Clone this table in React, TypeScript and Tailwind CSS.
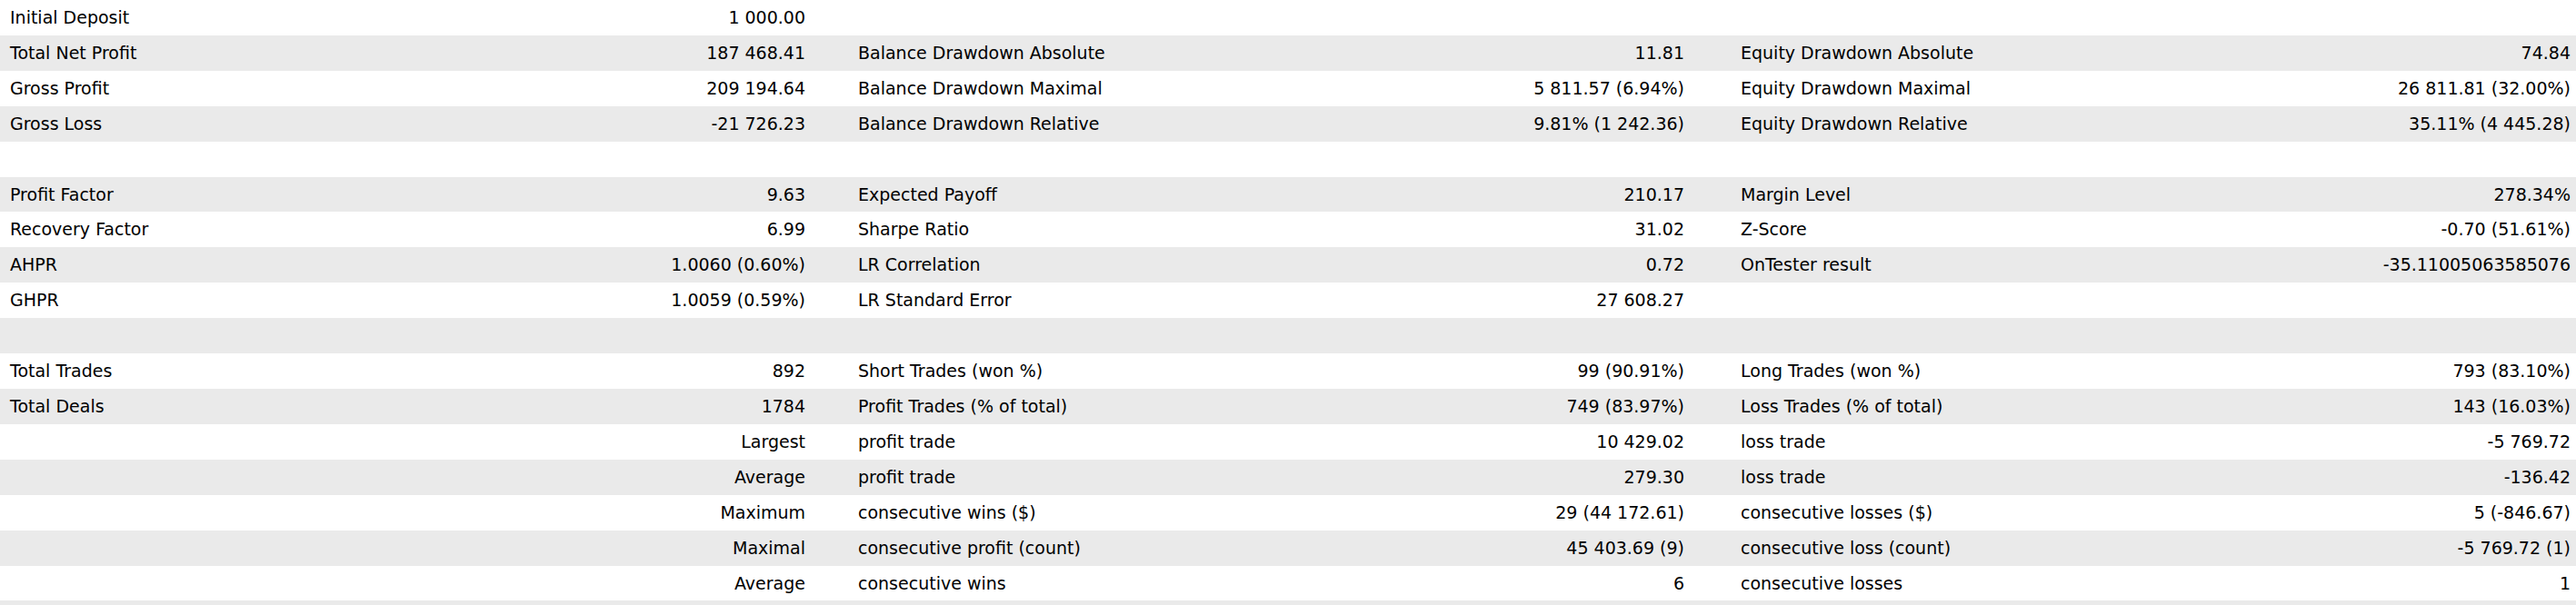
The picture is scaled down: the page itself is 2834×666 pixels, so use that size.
import React from "react";

type Row = [string, string, string, string, string, string];

const rows: Row[] = [
  ["Initial Deposit", "1 000.00", "", "", "", ""],
  ["Total Net Profit", "187 468.41", "Balance Drawdown Absolute", "11.81", "Equity Drawdown Absolute", "74.84"],
  ["Gross Profit", "209 194.64", "Balance Drawdown Maximal", "5 811.57 (6.94%)", "Equity Drawdown Maximal", "26 811.81 (32.00%)"],
  ["Gross Loss", "-21 726.23", "Balance Drawdown Relative", "9.81% (1 242.36)", "Equity Drawdown Relative", "35.11% (4 445.28)"],
  ["", "", "", "", "", ""],
  ["Profit Factor", "9.63", "Expected Payoff", "210.17", "Margin Level", "278.34%"],
  ["Recovery Factor", "6.99", "Sharpe Ratio", "31.02", "Z-Score", "-0.70 (51.61%)"],
  ["AHPR", "1.0060 (0.60%)", "LR Correlation", "0.72", "OnTester result", "-35.11005063585076"],
  ["GHPR", "1.0059 (0.59%)", "LR Standard Error", "27 608.27", "", ""],
  ["", "", "", "", "", ""],
  ["Total Trades", "892", "Short Trades (won %)", "99 (90.91%)", "Long Trades (won %)", "793 (83.10%)"],
  ["Total Deals", "1784", "Profit Trades (% of total)", "749 (83.97%)", "Loss Trades (% of total)", "143 (16.03%)"],
  ["", "Largest", "profit trade", "10 429.02", "loss trade", "-5 769.72"],
  ["", "Average", "profit trade", "279.30", "loss trade", "-136.42"],
  ["", "Maximum", "consecutive wins ($)", "29 (44 172.61)", "consecutive losses ($)", "5 (-846.67)"],
  ["", "Maximal", "consecutive profit (count)", "45 403.69 (9)", "consecutive loss (count)", "-5 769.72 (1)"],
  ["", "Average", "consecutive wins", "6", "consecutive losses", "1"],
  ["", "", "", "", "", ""],
];

export default function App() {
  return (
    <div
      className="w-[2834px] h-[666px] overflow-hidden bg-white text-[19px] text-[#000000]"
      style={{ fontFamily: '"DejaVu Sans", Verdana, sans-serif' }}
    >
      {rows.map((r, i) => (
        <div
          key={i}
          className={`flex h-[38.92px] leading-[38px] whitespace-nowrap ${
            i % 2 === 1 ? "bg-[#eaeaea]" : "bg-white"
          }`}
        >
          <div className="w-[500px] shrink-0 pl-[11px]">{r[0]}</div>
          <div className="w-[386px] shrink-0 text-right">{r[1]}</div>
          <div className="w-[559px] shrink-0 pl-[58px]">{r[2]}</div>
          <div className="w-[408px] shrink-0 text-right">{r[3]}</div>
          <div className="w-[564px] shrink-0 pl-[62px]">{r[4]}</div>
          <div className="w-[411px] shrink-0 text-right">{r[5]}</div>
        </div>
      ))}
    </div>
  );
}
